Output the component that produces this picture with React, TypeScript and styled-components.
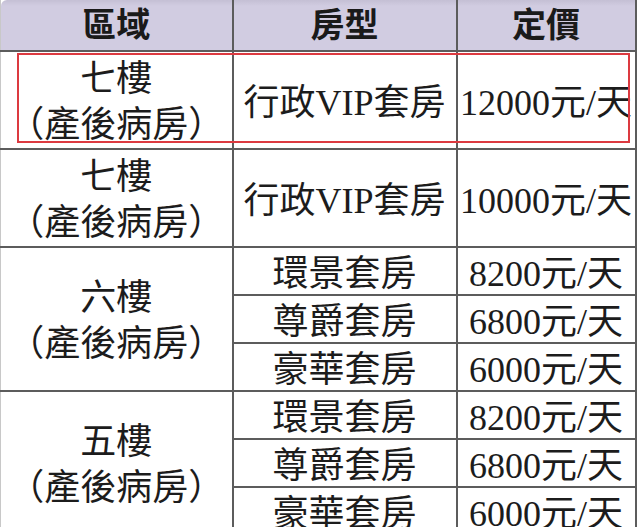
import { FC } from "react";
import styled, { createGlobalStyle } from "styled-components";

const GlobalStyle = createGlobalStyle`
  html, body {
    margin: 0;
    padding: 0;
    background: #ffffff;
  }
  body {
    font-family: "Liberation Serif", "Noto Sans CJK TC", serif;
    color: #1c1c1c;
  }
`;

interface SubRoom {
  type: string;
  price: string;
}

interface FloorGroup {
  floor: string;
  rooms: SubRoom[];
  tall?: boolean;
}

const groups: FloorGroup[] = [
  { floor: "七樓", tall: true, rooms: [{ type: "行政VIP套房", price: "12000元/天" }] },
  { floor: "七樓", tall: true, rooms: [{ type: "行政VIP套房", price: "10000元/天" }] },
  {
    floor: "六樓",
    rooms: [
      { type: "環景套房", price: "8200元/天" },
      { type: "尊爵套房", price: "6800元/天" },
      { type: "豪華套房", price: "6000元/天" },
    ],
  },
  {
    floor: "五樓",
    rooms: [
      { type: "環景套房", price: "8200元/天" },
      { type: "尊爵套房", price: "6800元/天" },
      { type: "豪華套房", price: "6000元/天" },
    ],
  },
];

const App: FC = () => {
  return (
    <>
      <GlobalStyle />
      <Page>
        <Frame>
          <PriceTable>
            <colgroup>
              <col style={{ width: 232 }} />
              <col style={{ width: 224 }} />
              <col style={{ width: 179 }} />
            </colgroup>
            <thead>
              <tr>
                <HeadCell>區域</HeadCell>
                <HeadCell>房型</HeadCell>
                <HeadCell>定價</HeadCell>
              </tr>
            </thead>
            <tbody>
              {groups.map((g, gi) =>
                g.rooms.map((room, ri) => (
                  <Row key={`${gi}-${ri}`} $tall={g.tall}>
                    {ri === 0 && (
                      <FloorCell rowSpan={g.rooms.length}>
                        <div>{g.floor}</div>
                        <div>（產後病房）</div>
                      </FloorCell>
                    )}
                    <Cell>{room.type}</Cell>
                    <Cell>{room.price}</Cell>
                  </Row>
                ))
              )}
            </tbody>
          </PriceTable>
          <Highlight />
        </Frame>
      </Page>
    </>
  );
};

export default App;

const Page = styled.main`
  width: 640px;
  height: 527px;
  overflow: hidden;
  background: #ffffff;
`;

const Frame = styled.div`
  position: relative;
  width: 636px;
`;

const PriceTable = styled.table`
  width: 636px;
  table-layout: fixed;
  border-collapse: collapse;
  border-left: 1px solid #c8c8c8;
`;

const HeadCell = styled.th`
  height: 48px;
  padding: 2px 0 0;
  background: linear-gradient(#c4bfd4 0, #d1cce1 6px, #d1cce1 100%);
  border: 2px solid #5c5c5c;
  border-top: none;
  font-family: "Liberation Serif", "Noto Sans CJK TC", serif;
  font-size: 34px;
  font-weight: 700;
  line-height: 44px;
  color: #1a1a1a;
  text-align: center;

  &:first-child {
    border-left: none;
    border-top-left-radius: 6px;
  }
`;

const Row = styled.tr<{ $tall?: boolean }>`
  height: ${(p) => (p.$tall ? "96px" : "48px")};
`;

const Cell = styled.td`
  padding: 6px 0 0;
  border: 2px solid #5c5c5c;
  font-size: 36px;
  line-height: 40px;
  text-align: center;
  white-space: nowrap;
  overflow: visible;
  color: #1c1c1c;
`;

const FloorCell = styled(Cell)`
  border-left: none;
  line-height: 46px;
  padding-top: 4px;
`;

const Highlight = styled.div`
  position: absolute;
  left: 17px;
  top: 53px;
  width: 609px;
  height: 86px;
  border: 2px solid #dc3a40;
  pointer-events: none;
`;
